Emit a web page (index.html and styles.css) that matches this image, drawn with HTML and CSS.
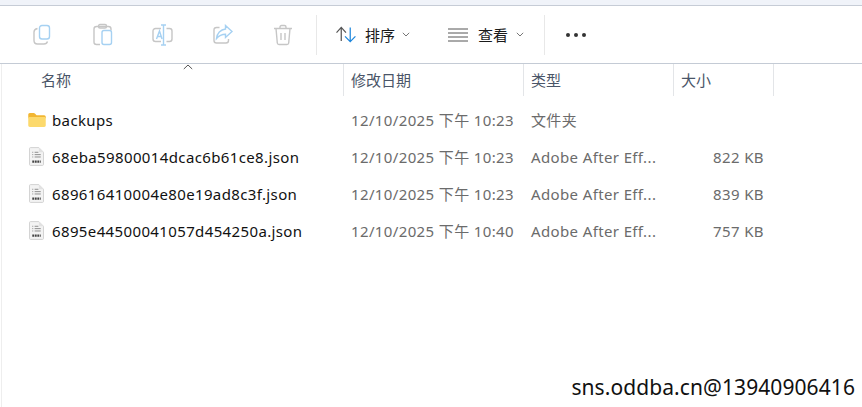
FILE: index.html
```html
<!DOCTYPE html>
<html lang="zh-CN">
<head>
<meta charset="utf-8">
<title>backups</title>
<link rel="stylesheet" href="styles.css">
</head>
<body>
<div class="window">
  <div class="topstrip"></div>
  <div class="toolbar">
    <div class="action-group">
      <span class="tool"><svg width="22" height="22" viewBox="0 0 22 22" fill="none" stroke-width="1.400"><path class="g" d="M5.500 4.500C3.200 5 2 6 2 8v8.500C2 19 3.300 20 5.500 20H12c1.800 0 3-.8 3.500-2.500"/><rect class="b" x="7.500" y="1.500" width="10" height="13.500" rx="2.500"/></svg></span>
      <span class="tool"><svg width="22" height="24" viewBox="0 0 22 24" fill="none" stroke-width="1.400"><path class="g" d="M8 21.500H4.500c-1.500 0-2.500-1-2.500-2.500V6c0-1.500 1-2.500 2.500-2.500h12C18 3.500 19 4.500 19 6v1.500"/><rect class="g" x="6.500" y="1.500" width="8" height="3.500" rx="1.500"/><rect class="b" x="10" y="7.500" width="9.500" height="14" rx="2"/></svg></span>
      <span class="tool"><svg width="22" height="22" viewBox="0 0 22 22" fill="none" stroke-width="1.400"><path class="g" d="M9 4.500H3.500C2 4.500 1 5.500 1 7v8c0 1.500 1 2.500 2.500 2.500H9M14.500 4.500h3C19 4.500 20 5.500 20 7v8c0 1.500-1 2.500-2.500 2.500h-3"/><path class="b" d="M9 1h5M11.500 1v20M9 21h5M4.500 15L7.500 7 10 15M5.500 12.500h3.800"/></svg></span>
      <span class="tool"><svg width="22" height="22" viewBox="0 0 22 22" fill="none" stroke-width="1.400"><path class="g" d="M7.500 3.500H4.500C3 3.500 2 4.500 2 6v10.500C2 18 3 19 4.500 19H14c1.500 0 2.500-1 2.500-2.500V15"/><path class="b" d="M13.500 1.500l6.500 6-6.500 6v-3.300C10 10.200 7 11.500 4.500 14.500 5 9.500 8.500 5.500 13.500 5z"/></svg></span>
      <span class="tool"><svg width="20" height="22" viewBox="0 0 20 22" fill="none" stroke-width="1.400"><path class="g" d="M1 4.500h18M7 4.500V3c0-.8.600-1.500 1.500-1.500h3c.9 0 1.500.7 1.500 1.500v1.500M3 4.500l1.300 14.500c.1 1 .8 1.500 1.700 1.500h8c.9 0 1.600-.5 1.700-1.500L17 4.500M8 9v7M12 9v7"/></svg></span>
    </div>
    <div class="divider"></div>
    <div class="menu-group">
      <span class="menu sort">
        <svg class="menu-icon" width="21" height="17" viewBox="0 0 22 18" fill="none" stroke-width="1.300"><path stroke="#555" d="M1.500 7L6.500 1.500 11.500 7M6.500 2v14"/><path stroke="#1c86dc" d="M10.500 11l5.500 5.500L21.500 11M16 16V1.500"/></svg>
        <span class="menu-label">排序</span>
        <svg class="chev" width="8" height="5" viewBox="0 0 8 5" fill="none"><path d="M.8.800L4 4 7.200.800"/></svg>
      </span>
      <span class="menu view">
        <svg class="menu-icon" width="20" height="14" viewBox="0 0 20 14" fill="none" stroke="#555" stroke-width="1"><path d="M0 1h20M0 5h20M0 9h20M0 13h20"/></svg>
        <span class="menu-label">查看</span>
        <svg class="chev" width="8" height="5" viewBox="0 0 8 5" fill="none"><path d="M.8.800L4 4 7.200.800"/></svg>
      </span>
    </div>
    <div class="divider"></div>
    <div class="more"><i></i><i></i><i></i></div>
  </div>
  <div class="content">
    <div class="head">
      <div class="cell col-name">名称<svg class="sort-caret" width="10" height="6" viewBox="0 0 10 6" fill="none"><path d="M.8 5L5 1l4.200 4"/></svg></div>
      <div class="cell">修改日期</div>
      <div class="cell">类型</div>
      <div class="cell">大小</div>
    </div>
    <div class="row">
      <div class="name"><svg class="folder" width="18" height="14" viewBox="0 0 20 16"><path fill="#f2b632" d="M0 2C0 .9.700 0 1.800 0h4.400c.7 0 1.200.300 1.700.800L9.500 2.500H18.200C19.300 2.500 20 3.300 20 4.500V6H0z"/><path fill="#fcd96c" d="M0 4.500h18.300c1 0 1.700.7 1.700 1.700v7.900c0 1.100-.7 1.900-1.800 1.900H1.800C.7 16 0 15.200 0 14.100z"/></svg>backups</div>
      <div class="meta">12/10/2025 下午 10:23</div><div class="meta">文件夹</div><div class="meta size"></div>
    </div>
    <div class="row">
      <div class="name"><svg class="file" width="15" height="19" viewBox="0 0 16 20"><use href="#jsonfile"/></svg>68eba59800014dcac6b61ce8.json</div>
      <div class="meta">12/10/2025 下午 10:23</div><div class="meta">Adobe After Eff...</div><div class="meta size">822 KB</div>
    </div>
    <div class="row">
      <div class="name"><svg class="file" width="15" height="19" viewBox="0 0 16 20"><use href="#jsonfile"/></svg>689616410004e80e19ad8c3f.json</div>
      <div class="meta">12/10/2025 下午 10:23</div><div class="meta">Adobe After Eff...</div><div class="meta size">839 KB</div>
    </div>
    <div class="row">
      <div class="name"><svg class="file" width="15" height="19" viewBox="0 0 16 20"><use href="#jsonfile"/></svg>6895e44500041057d454250a.json</div>
      <div class="meta">12/10/2025 下午 10:40</div><div class="meta">Adobe After Eff...</div><div class="meta size">757 KB</div>
    </div>
  </div>
  <div class="watermark">sns.oddba.cn@13940906416</div>
</div>
<svg class="defs" width="0" height="0"><defs><g id="jsonfile"><path fill="#f3f3f3" stroke="#d0d0d0" d="M.500 1.500C.500 1 1 .500 1.500 .500H10.500L15.500 5.500V18.500C15.500 19 15 19.500 14.500 19.500H1.500C1 19.500.500 19 .500 18.500z"/><path fill="#e2e2e2" d="M10.500 .500V5.500H15.500z"/><path stroke="#888" d="M3.500 5.500h1M6 5.500h4M3.500 8h1M6 8h6.500M3.500 10.500h1M6 10.500h6.500"/><path stroke="#444" stroke-width="2.400" stroke-dasharray="2 .7" d="M3.500 15.500h9"/></g></defs></svg>
</body>
</html>
```
FILE: styles.css
```css
* { box-sizing: border-box; }
html, body { margin: 0; padding: 0; height: 100%; background: #fff; }
body { overflow: hidden; font-family: "Noto Sans", "Noto Sans CJK SC", sans-serif; color: #111; }
.defs { position: absolute; }
.window { position: relative; width: 862px; height: 407px; overflow: hidden; }
.topstrip { height: 6px; background: #f0f3f9; border-bottom: 1px solid #c6ccd6; }
.toolbar { height: 58px; display: flex; align-items: center; border-bottom: 1px solid #c4cbd5; padding-left: 13px; }
.action-group { display: flex; width: 303px; padding-top: 1px; }
.tool { flex: none; width: 60px; display: flex; justify-content: center; align-items: center; height: 24px; }
.tool svg { display: block; }
.g { stroke: #c6c6c6; }
.b { stroke: #a6d1f2; }
.divider { width: 1px; height: 40px; background: #e8e8e8; }
.menu-group { display: flex; width: 227px; padding-left: 18px; }
.menu { display: flex; align-items: center; font-size: 15px; color: #1a1a1a; }
.sort { width: 113px; }
.menu-icon { margin-right: 9px; }
.view .menu-icon { margin-right: 10px; }
.menu-label { margin-right: 8px; }
.sort .menu-label { margin-right: 7px; }
.chev path { stroke: #777; stroke-width: 1; }
.more { display: flex; gap: 4px; margin-left: 21px; }
.more i { width: 4px; height: 4px; border-radius: 50%; background: #333; }
.content { border-left: 1px solid #eee; margin-left: 1px; height: 343px; }
.head { display: grid; grid-template-columns: 342px 180px 150px 100px; height: 32px; position: relative; }
.cell { border-right: 1px solid #e3e5e8; padding-left: 7px; font-size: 15px; line-height: 32px; color: #4a5568; position: relative; }
.col-name { padding-left: 39px; }
.sort-caret { position: absolute; left: 181px; top: 0; }
.sort-caret path { stroke: #555; stroke-width: 1; }
.row { display: grid; grid-template-columns: 342px 180px 150px 100px; height: 37px; align-items: center; font-size: 15px; letter-spacing: .37px; }
.head + .row { margin-top: 5px; }
.name { display: flex; align-items: center; color: #111; padding-left: 26px; }
.folder { margin-right: 6px; }
.file { margin: 0 8px 0 1px; }
.meta { padding-left: 7px; color: #6b6b6b; }
.size { text-align: right; padding: 0 10px 0 0; }
.watermark { position: absolute; right: 7px; bottom: 6px; font-size: 21px; letter-spacing: .08px; line-height: 28px; color: #111; background: #fff; }
```
